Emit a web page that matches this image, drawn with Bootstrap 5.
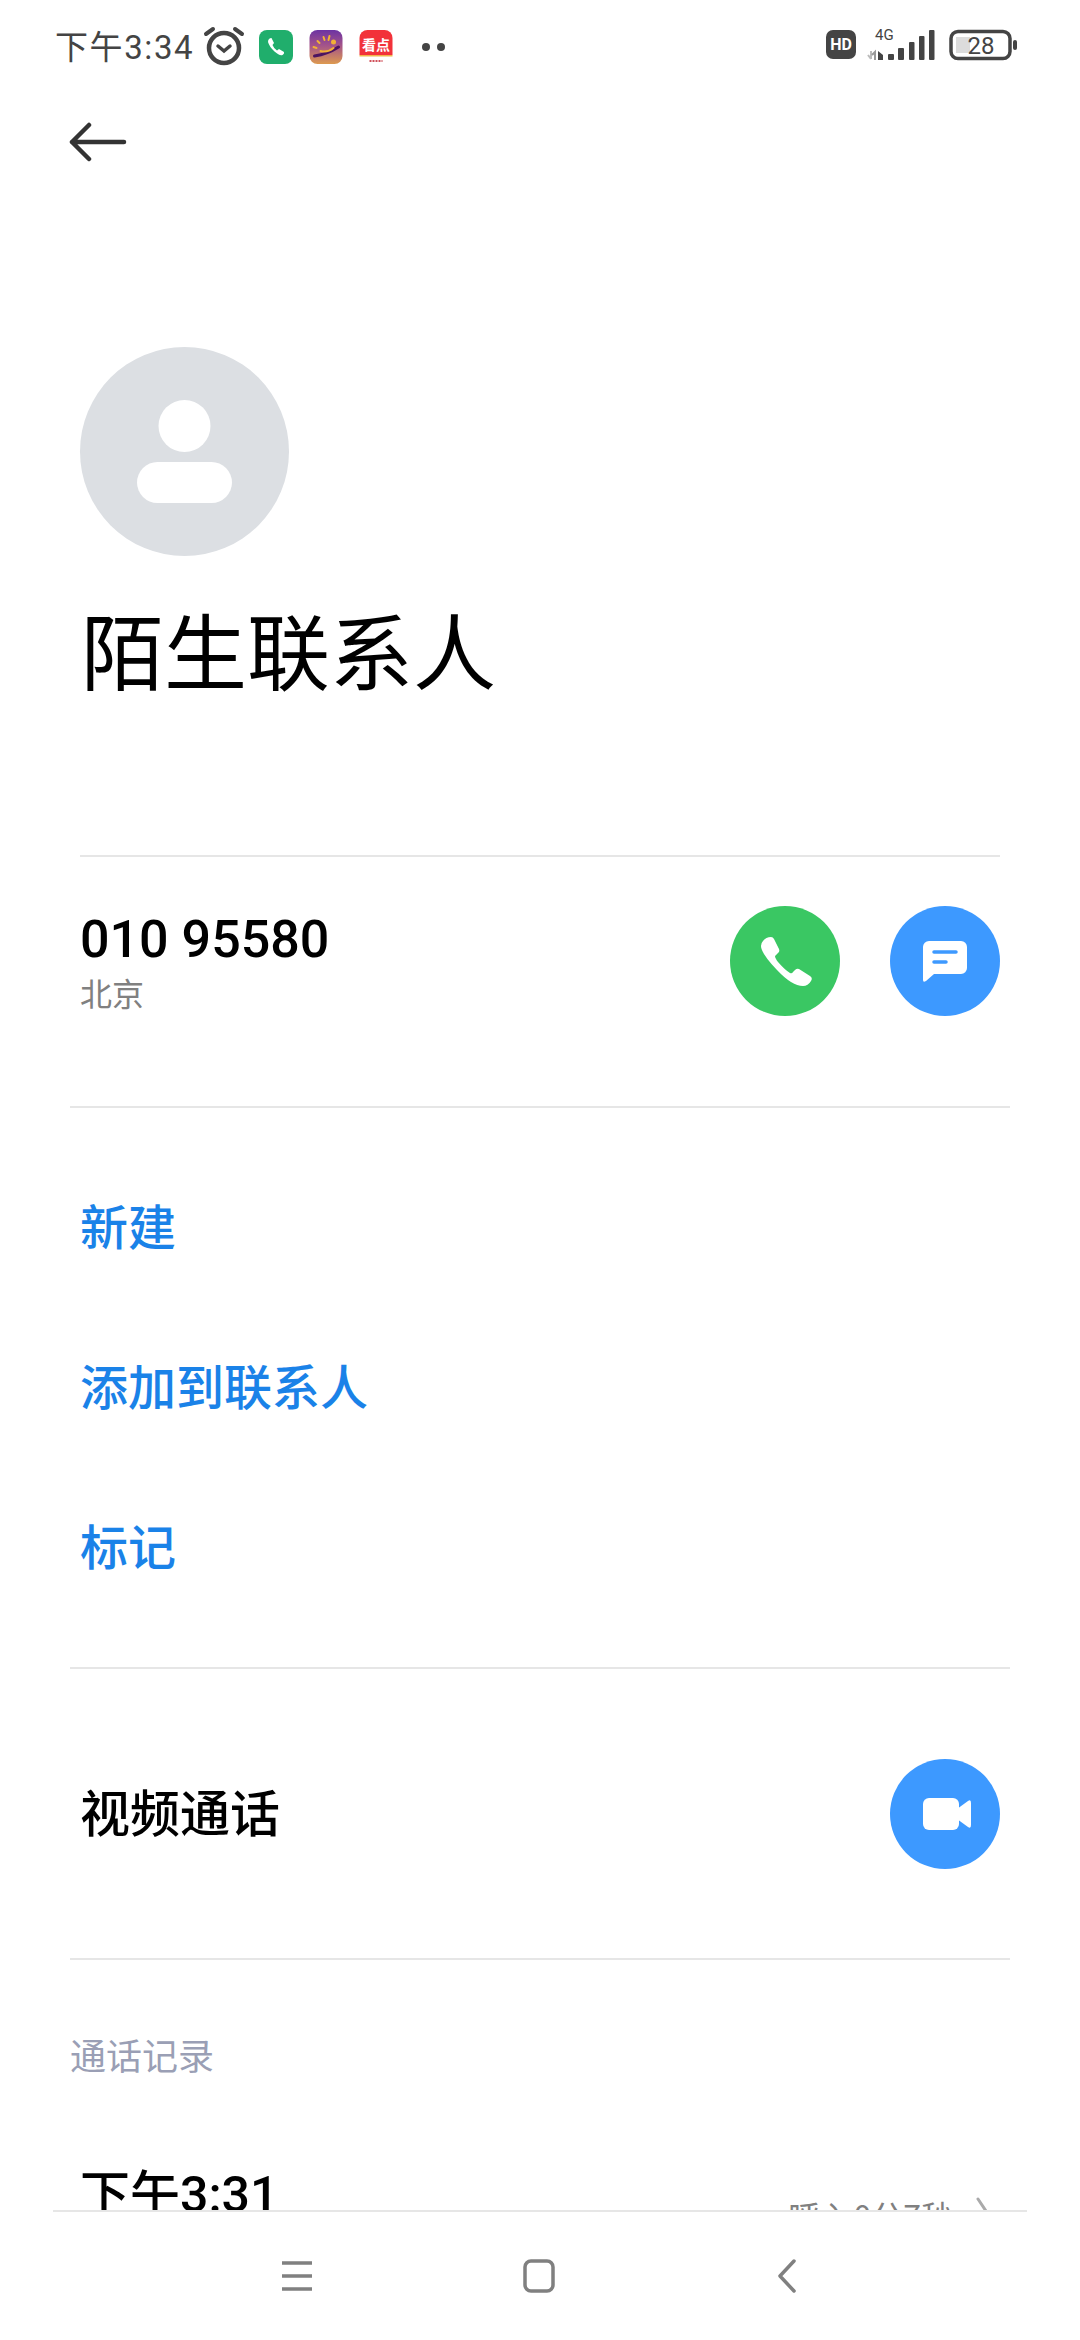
<!DOCTYPE html>
<html lang="zh-CN">
<head>
<meta charset="utf-8">
<title>陌生联系人</title>
<link href="https://cdn.jsdelivr.net/npm/bootstrap@5.3.0/dist/css/bootstrap.min.css" rel="stylesheet">
<style>
html,body{height:2340px;margin:0;background:#fff;}
body{font-family:Roboto,"Noto Sans CJK SC",sans-serif;color:#000;overflow:hidden;}
.screen{height:2340px;}
.content-area{height:2210px;}
svg{display:block;flex:none;}
.status-row{height:90px;padding:0 0 0 55px;color:#444;}
.clock{font-size:33px;line-height:40px;width:147px;margin-top:6px;letter-spacing:1.6px;white-space:nowrap;}
.ico-alarm{margin:2px 0 0 1px;}
.ico-app{margin:3px 0 0 14px;}
.ico-app + .ico-app{margin-left:16px;}
.dot-pair{margin:3px 0 0 29px;gap:7px;}
.dot-pair i{width:8px;height:8px;border-radius:50%;background:#444;display:block;}
.status-right{margin-left:auto;margin-right:62px;}
.back-row{height:104px;padding-left:69px;}
.avatar-wrap{margin:153px 0 0 80px;width:209px;height:209px;border-radius:50%;background:#dcdfe3;}
.person-name{font-size:83px;line-height:100px;font-weight:400;margin:42px 0 0 81px;font-family:"Noto Sans CJK SC",sans-serif;}
.contact-rule{margin:157px 80px 0;border-top:2px solid #e6e6e6;}
.contact-row{height:249px;padding:49px 80px 0;}
.phone-no{font-size:52px;line-height:64px;font-weight:500;margin-top:2px;}
.phone-loc{font-size:32px;line-height:46px;margin-top:-3px;color:#808080;font-family:"Noto Sans CJK SC",sans-serif;}
.round-btn{width:110px;height:110px;padding:0;border:0;border-radius:50%;}
.round-green{background:#3ac763;}
.round-blue{background:#3d99ff;}
.btn-gap{gap:50px;}
.split{margin:0 70px;border-top:2px solid #e6e6e6;}
.action-list{padding:40px 80px 39px;--bs-list-group-border-width:0;--bs-list-group-bg:transparent;}
.action-list .list-group-item{height:160px;padding:0 0 8px;font-size:48px;font-weight:500;color:#1a82e8;display:flex;align-items:center;font-family:"Noto Sans CJK SC",sans-serif;}
.video-row{height:289px;padding:0 80px;}
.row-title{font-size:50px;font-weight:500;margin-top:-6px;font-family:"Noto Sans CJK SC",sans-serif;}
.log-head{font-size:36px;line-height:50px;color:#9a9fb5;margin:69px 0 0 70px;font-family:"Noto Sans CJK SC",sans-serif;}
.log-row{padding:0 90px 0 80px;margin-top:80px;}
.log-time{font-size:50px;line-height:72px;font-weight:500;}
.log-meta{font-size:32px;line-height:44px;color:#808080;margin-top:34px;gap:23px;word-spacing:-6px;font-family:"Noto Sans CJK SC",sans-serif;}
.bottom-nav{height:130px;margin:0 53px;border-top:2px solid #e6e6e6;padding-left:229px;}
.gap-one{margin-left:211px;}
.gap-two{margin-left:223px;}
</style>
</head>
<body>
<div class="screen d-flex flex-column">
  <main class="content-area overflow-hidden">
    <div class="status-row d-flex align-items-center">
      <span class="clock">下午3:34</span>
      <svg class="ico-alarm" width="42" height="42" viewBox="2 0 42 42" fill="none" stroke="#444" stroke-linecap="round" aria-hidden="true">
        <circle cx="23" cy="23" r="15" stroke-width="4.500"/>
        <path d="M17 21l6 5 6-5" stroke-width="3.500"/>
        <path d="M5 9L12 4M41 9L34 4" stroke-width="4"/>
      </svg>
      <svg class="ico-app" width="34" height="34" viewBox="0 0 34 34" aria-hidden="true">
        <rect width="34" height="34" rx="8" fill="#20ae6c"/>
        <path d="M10 9q1-1 2.500-1l2.500 5-1.500 2q1 3 4.500 5.500l2-1.500 5 3q.5 2-1.500 3-3 1-8-3.500T9 12q0-2 1-3z" fill="#fff"/>
      </svg>
      <svg class="ico-app" width="34" height="34" viewBox="0 0 33 34" aria-hidden="true">
        <defs><linearGradient id="dawn" x1="0" y1="0" x2="0" y2="1"><stop offset="0" stop-color="#6c33a3"/><stop offset=".45" stop-color="#a3538a"/><stop offset="1" stop-color="#dd9a50"/></linearGradient></defs>
        <rect width="33" height="34" rx="8" fill="url(#dawn)"/>
        <path d="M5 26Q18 24 29 17" stroke="#4c1461" stroke-width="3" fill="none" stroke-linecap="round"/>
        <path d="M11 21q7 2 13-3M8 11l2 2M14 7l1 3M20 6l-1 4M4 17l3 1" stroke="#f2b136" stroke-width="2" fill="none" stroke-linecap="round"/>
        <circle cx="24" cy="12" r="2.500" fill="#f2b136"/>
      </svg>
      <svg class="ico-app" width="34" height="34" viewBox="0 0 33 34" aria-hidden="true">
        <path d="M8 0h17a8 8 0 0 1 8 8v17H0V8a8 8 0 0 1 8-8z" fill="#f2323a"/>
        <rect y="25" width="33" height="1.500" fill="#f0b54a"/>
        <text x="16.500" y="20" text-anchor="middle" font-size="14" font-weight="700" fill="#fff" font-family="Noto Sans CJK SC">看点</text>
        <path d="M10 31h13" stroke="#d0505a" stroke-width="2" stroke-dasharray="2 1"/>
      </svg>
      <span class="dot-pair d-flex"><i></i><i></i></span>
      <svg class="status-right" width="192" height="44" viewBox="826 25 192 44" aria-hidden="true">
        <rect x="826" y="32" width="30" height="29" rx="7" fill="#444"/>
        <text x="841" y="52" text-anchor="middle" font-size="16" font-weight="700" fill="#fff" font-family="Roboto">HD</text>
        <text x="875" y="42" font-size="15" fill="#444" font-family="Roboto">4G</text>
        <path d="M871 53v8M868 57l3 4" stroke="#bbb" stroke-width="2" fill="none"/>
        <path d="M875 62v-8l-3 3" stroke="#999" stroke-width="2" fill="none"/>
        <g fill="#444">
          <path d="M878 62v-9l5 4v5z"/>
          <rect x="888" y="56" width="6" height="6" rx="1"/>
          <rect x="898" y="50" width="6" height="12" rx="1"/>
          <rect x="909" y="44" width="5.500" height="18" rx="1"/>
          <rect x="919" y="38" width="5.500" height="24" rx="1"/>
          <rect x="929" y="32" width="5.500" height="30" rx="1"/>
        </g>
        <rect x="951" y="33.500" width="59" height="27" rx="7" fill="none" stroke="#444" stroke-width="3.500"/>
        <rect x="956" y="39" width="14" height="16" fill="#dcdcdc"/>
        <text x="981" y="56" text-anchor="middle" font-size="24" fill="#444" font-family="Roboto">28</text>
        <rect x="1013" y="42" width="4" height="10" rx="2" fill="#444"/>
      </svg>
    </div>

    <div class="back-row d-flex align-items-center">
      <svg width="58" height="40" viewBox="0 0 58 40" fill="none" stroke="#333" stroke-width="4.500" stroke-linecap="round" stroke-linejoin="round" aria-label="返回">
        <path d="M3 20H55M20 3L3 20l17 17"/>
      </svg>
    </div>

    <div class="avatar-wrap">
      <svg width="209" height="209" viewBox="0 0 209 209" aria-hidden="true">
        <circle cx="104.500" cy="79" r="26" fill="#fff"/>
        <rect x="57" y="115" width="95" height="41" rx="20.500" fill="#fff"/>
      </svg>
    </div>
    <h1 class="person-name">陌生联系人</h1>

    <div class="contact-rule"></div>
    <section class="contact-row d-flex justify-content-between align-items-start">
      <div>
        <div class="phone-no">010 95580</div>
        <div class="phone-loc">北京</div>
      </div>
      <div class="d-flex btn-gap">
        <button class="btn round-btn round-green" type="button" aria-label="拨打">
          <svg width="110" height="110" viewBox="0 0 110 110" aria-hidden="true"><path d="M33 35Q36 31 41 31Q43 31 44 33L49 43Q50 46 48 47L45 50Q45 52 48 56Q55 64 60 67Q62 68 63 66L65 64Q67 62 69 63L80 70Q83 72 81 75Q78 80 73 80Q62 80 47 64Q31 47 31 40Q31 37 33 35Z" fill="#fff"/></svg>
        </button>
        <button class="btn round-btn round-blue" type="button" aria-label="短信">
          <svg width="110" height="110" viewBox="0 0 110 110" aria-hidden="true"><path d="M39 35H71a6 6 0 0 1 6 6V62a6 6 0 0 1-6 6H44L36 75Q33 77 33 74V41a6 6 0 0 1 6-6Z" fill="#fff"/><path d="M44 46H66M44 56H56" stroke="#3d99ff" stroke-width="3.500" stroke-linecap="round"/></svg>
        </button>
      </div>
    </section>

    <div class="split"></div>
    <div class="list-group list-group-flush action-list">
      <a class="list-group-item" href="#">新建</a>
      <a class="list-group-item" href="#">添加到联系人</a>
      <a class="list-group-item" href="#">标记</a>
    </div>

    <div class="split"></div>
    <section class="video-row d-flex justify-content-between align-items-center">
      <span class="row-title">视频通话</span>
      <button class="btn round-btn round-blue" type="button" aria-label="视频通话">
        <svg width="110" height="110" viewBox="0 0 110 110" aria-hidden="true"><rect x="33" y="39" width="36" height="32" rx="6" fill="#fff"/><path d="M67 50L78 42Q81 40 81 44V66Q81 70 78 68L67 60Z" fill="#fff"/></svg>
      </button>
    </section>

    <div class="split"></div>
    <div class="log-head">通话记录</div>
    <div class="log-row d-flex justify-content-between align-items-start">
      <div class="log-time">下午3:31</div>
      <div class="log-meta d-flex align-items-start">
        <span>呼入 0分7秒</span>
        <svg class="mt-1" width="14" height="34" viewBox="0 0 14 34" fill="none" stroke="#aaa" stroke-width="3" stroke-linecap="round" aria-hidden="true"><path d="M2 2L12 17 2 32"/></svg>
      </div>
    </div>
  </main>

  <nav class="bottom-nav d-flex align-items-center">
    <svg width="30" height="32" viewBox="0 0 30 32" stroke="#808080" stroke-width="3.500" aria-label="菜单"><path d="M0 3H30M0 16H30M0 29H30"/></svg>
    <svg class="gap-one" width="32" height="34" viewBox="0 0 32 34" fill="none" stroke="#808080" stroke-width="3.500" aria-label="主页"><rect x="2" y="2" width="28" height="30" rx="6"/></svg>
    <svg class="gap-two" width="18" height="34" viewBox="0 0 18 34" fill="none" stroke="#808080" stroke-width="3.500" stroke-linecap="round" stroke-linejoin="round" aria-label="返回"><path d="M16 2L2 17l14 15"/></svg>
  </nav>
</div>
<script src="https://cdn.jsdelivr.net/npm/bootstrap@5.3.0/dist/js/bootstrap.bundle.min.js"></script>
</body>
</html>
